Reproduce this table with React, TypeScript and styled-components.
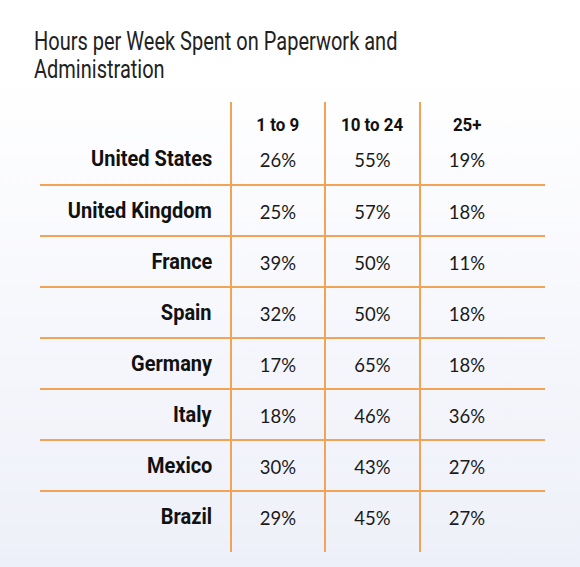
import React from "react";
import styled, { createGlobalStyle } from "styled-components";

const GlobalStyle = createGlobalStyle`
  html, body {
    margin: 0;
    padding: 0;
  }
  body {
    background: #fff;
  }
`;

type Row = {
  country: string;
  values: [string, string, string];
};

const columns = ["1 to 9", "10 to 24", "25+"];

const rows: Row[] = [
  { country: "United States", values: ["26%", "55%", "19%"] },
  { country: "United Kingdom", values: ["25%", "57%", "18%"] },
  { country: "France", values: ["39%", "50%", "11%"] },
  { country: "Spain", values: ["32%", "50%", "18%"] },
  { country: "Germany", values: ["17%", "65%", "18%"] },
  { country: "Italy", values: ["18%", "46%", "36%"] },
  { country: "Mexico", values: ["30%", "43%", "27%"] },
  { country: "Brazil", values: ["29%", "45%", "27%"] },
];

const App: React.FC = () => {
  return (
    <>
      <GlobalStyle />
      <Page>
        <Title>
          <Narrow $scale={0.8} $origin="left">
            Hours per Week Spent on Paperwork and
          </Narrow>
          <Narrow $scale={0.8} $origin="left">
            Administration
          </Narrow>
        </Title>
        <Table>
          <TableRow $kind="header">
            <LabelCell />
            {columns.map((c) => (
              <HeadCell key={c}>
                <Narrow $scale={0.94} $origin="center">
                  {c}
                </Narrow>
              </HeadCell>
            ))}
          </TableRow>
          {rows.map((r, i) => (
            <TableRow key={r.country} $kind="data" $divider={i > 0}>
              <LabelCell>
                <Narrow $scale={0.93} $origin="right">
                  {r.country}
                </Narrow>
              </LabelCell>
              {r.values.map((v, j) => (
                <ValueCell key={j}>{v}</ValueCell>
              ))}
            </TableRow>
          ))}
          <TableRow $kind="foot">
            <LabelCell />
            <ValueCell />
            <ValueCell />
            <ValueCell />
          </TableRow>
        </Table>
      </Page>
    </>
  );
};

const Page = styled.main`
  width: 580px;
  min-height: 567px;
  box-sizing: border-box;
  padding: 28px 0 0 34px;
  background: linear-gradient(180deg, #ffffff 0%, #ffffff 12%, #eef0f9 100%);
`;

// Roboto Condensed is not installed, so the condensed look is made by squeezing Roboto
const Narrow = styled.span<{ $scale: number; $origin: "left" | "right" | "center" }>`
  display: inline-block;
  white-space: nowrap;
  transform: scaleX(${(p) => p.$scale});
  transform-origin: ${(p) => p.$origin} center;
`;

const Title = styled.h1`
  margin: 0;
  display: flex;
  flex-direction: column;
  align-items: flex-start;
  font-family: "Roboto", sans-serif;
  font-weight: 400;
  font-size: 25px;
  line-height: 28px;
  color: #222;
`;

const Table = styled.div`
  margin: 18px 0 0 6px;
  width: 505px;
`;

const TableRow = styled.div<{ $kind: "header" | "data" | "foot"; $divider?: boolean }>`
  display: grid;
  grid-template-columns: 190px 94px 95px 94px 32px;
  box-sizing: border-box;
  height: ${(p) => (p.$kind === "header" ? "31px" : p.$kind === "foot" ? "11px" : "51px")};
  border-top: ${(p) => (p.$divider ? "2px solid #f2a456" : "none")};
`;

const LabelCell = styled.div`
  height: 100%;
  display: flex;
  align-items: center;
  justify-content: flex-end;
  padding-right: 18px;
  font-family: "Roboto", sans-serif;
  font-weight: 700;
  font-size: 21.5px;
  color: #111;
`;

const HeadCell = styled.div`
  height: 100%;
  box-sizing: border-box;
  border-left: 2px solid #f2a456;
  padding-top: 14px;
  text-align: center;
  font-family: "Roboto", sans-serif;
  font-weight: 700;
  font-size: 18px;
  line-height: 18px;
  color: #111;
`;

const ValueCell = styled.div`
  height: 100%;
  box-sizing: border-box;
  border-left: 2px solid #f2a456;
  display: flex;
  align-items: center;
  justify-content: center;
  padding-top: 2px;
  font-family: "Lato", "Noto Sans", sans-serif;
  font-size: 18.5px;
  color: #1a1a1a;
`;

export default App;
